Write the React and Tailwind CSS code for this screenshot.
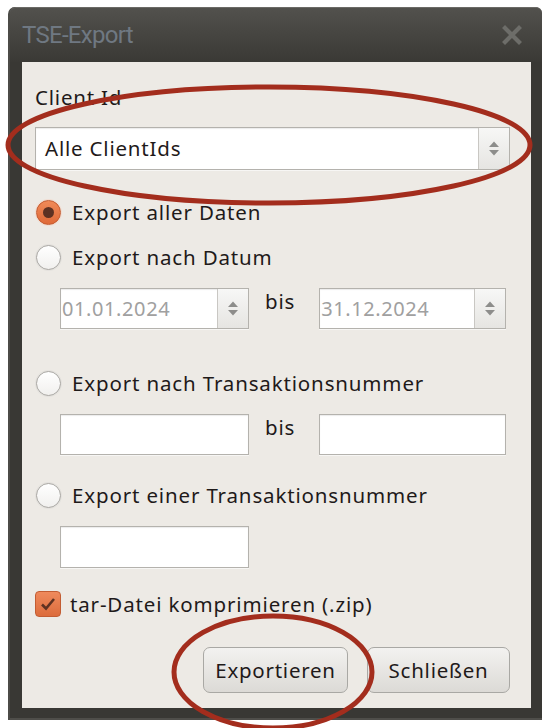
import React from "react";

const font = { fontFamily: '"Noto Sans", "Open Sans", sans-serif' };

function Spin() {
  return (
    <div className="flex h-full w-[31px] flex-col items-center justify-center gap-[3px] border-l border-[#c9c7c3] bg-gradient-to-b from-[#f7f7f6] to-[#e6e5e2]">
      <svg width="12" height="6" viewBox="0 0 12 6"><path d="M1 6 L6 0.5 L11 6 Z" fill="#8d8d8b" /></svg>
      <svg width="12" height="6" viewBox="0 0 12 6"><path d="M1 0 L6 5.5 L11 0 Z" fill="#8d8d8b" /></svg>
    </div>
  );
}

function Radio({ checked, label }) {
  return (
    <div className="flex h-[28px] items-center pl-[1px]">
      {checked ? (
        <div className="flex h-[25px] w-[25px] items-center justify-center rounded-full border border-[#c65a2e] bg-gradient-to-b from-[#f08a58] to-[#df6a38] shadow-[0_0_0_1px_#f1ddd2]">
          <div className="h-[11px] w-[11px] rounded-full bg-[#5d3122]" />
        </div>
      ) : (
        <div className="h-[25px] w-[25px] rounded-full border border-[#a9a7a3] bg-gradient-to-b from-[#ffffff] to-[#f1f0ee] shadow-[0_0_0_1px_#e4e2de]" />
      )}
      <span className="ml-[11px] text-[20.5px] leading-[28px] tracking-[0.85px] text-[#1f1a1a]">{label}</span>
    </div>
  );
}

function Field({ w, children }) {
  return (
    <div className={`flex h-full ${w} items-center border border-[#b4b2ad] bg-white shadow-[inset_0_1px_1px_rgba(0,0,0,0.08),0_1px_0_#f7f6f4]`}>
      {children}
    </div>
  );
}

function DateField({ w, value }) {
  return (
    <Field w={w}>
      <span className="flex-1 pl-[1px] text-[20px] tracking-[0.6px] text-[#a0a0a0]">{value}</span>
      <Spin />
    </Field>
  );
}

export default function App() {
  return (
    <div className="relative h-[728px] w-[552px] overflow-hidden bg-white" style={font}>
      <div className="ml-[8px] mt-[7px] flex h-[713px] w-[534px] flex-col rounded-t-[7px] border-l-2 border-b-2 border-l-[#4c4b47] border-b-[#4f4e4a] bg-[#393834]">
        {/* title bar */}
        <div className="flex h-[55px] items-center justify-between rounded-t-[6px] border-t border-[#6b6a66] bg-gradient-to-b from-[#52514d] to-[#3a3935] pl-[12px] pr-[20px]">
          <span className="text-[24px] tracking-[-0.7px] text-[#6f7882]" style={{ fontFamily: '"Roboto", sans-serif' }}>TSE-Export</span>
          <svg width="20" height="20" viewBox="0 0 20 20">
            <path d="M3 3 L17 17 M17 3 L3 17" stroke="#6d6d69" strokeWidth="4.2" strokeLinecap="square" />
          </svg>
        </div>

        {/* content */}
        <div className="mb-[10px] ml-[12px] mr-[11px] flex flex-1 flex-col bg-[#edeae5] pl-[13px] pr-[21px] pt-[21px] text-[#1f1a1a]">
          <div className="text-[20.5px] leading-[28px] tracking-[0.8px]">Client Id</div>
          <div className="mt-[16px] h-[43px]">
            <Field w="w-full">
              <span className="flex-1 pl-[9px] text-[20.5px] tracking-[0.8px]">Alle ClientIds</span>
              <Spin />
            </Field>
          </div>

          <div className="mt-[28px]"><Radio checked label="Export aller Daten" /></div>
          <div className="mt-[17px]"><Radio label="Export nach Datum" /></div>
          <div className="ml-[25px] mt-[17px] flex h-[41px] items-start">
            <DateField w="w-[189px]" value="01.01.2024" />
            <span className="ml-[16px] mt-[-1px] text-[20.5px] leading-[28px] tracking-[0.8px]">bis</span>
            <div className="ml-[24px] h-full"><DateField w="w-[187px]" value="31.12.2024" /></div>
          </div>

          <div className="mt-[40px]"><Radio label="Export nach Transaktionsnummer" /></div>
          <div className="ml-[25px] mt-[17px] flex h-[41px] items-start">
            <Field w="w-[189px]" />
            <span className="ml-[16px] mt-[-1px] text-[20.5px] leading-[28px] tracking-[0.8px]">bis</span>
            <div className="ml-[24px] h-full"><Field w="w-[187px]" /></div>
          </div>

          <div className="mt-[26px]"><Radio label="Export einer Transaktionsnummer" /></div>
          <div className="ml-[25px] mt-[17px] h-[42px]"><Field w="w-[189px]" /></div>

          <div className="mt-[22px] flex h-[28px] items-center">
            <div className="flex h-[26px] w-[26px] items-center justify-center rounded-[4px] border border-[#c35d33] bg-gradient-to-b from-[#ef8a5c] to-[#dc6c3c]">
              <svg width="16" height="14" viewBox="0 0 16 14">
                <path d="M2 7.5 L6 11.5 L14 2" stroke="#5e3222" strokeWidth="2.6" fill="none" />
              </svg>
            </div>
            <span className="ml-[9px] text-[20.5px] leading-[28px] tracking-[0.85px]">tar-Datei komprimieren (.zip)</span>
          </div>

          <div className="mt-[29px] flex justify-end gap-[19px]">
            <button className="h-[46px] w-[145px] rounded-[7px] border border-[#a9a8a4] bg-gradient-to-b from-[#f3f2f0] to-[#dcdad6] text-[20.5px] tracking-[0.75px] text-[#1f1a1a]">Exportieren</button>
            <button className="h-[46px] w-[143px] rounded-[7px] border border-[#a9a8a4] bg-gradient-to-b from-[#f3f2f0] to-[#dcdad6] text-[20.5px] tracking-[0.75px] text-[#1f1a1a]">Schließen</button>
          </div>
        </div>
      </div>

      {/* annotation ellipses */}
      <svg className="pointer-events-none absolute left-0 top-0" width="552" height="728" viewBox="0 0 552 728">
        <ellipse cx="269" cy="145" rx="261" ry="58" fill="none" stroke="#a32d1d" strokeWidth="5" />
        <ellipse cx="273" cy="672" rx="99" ry="56" fill="none" stroke="#a32d1d" strokeWidth="5" />
      </svg>
    </div>
  );
}
